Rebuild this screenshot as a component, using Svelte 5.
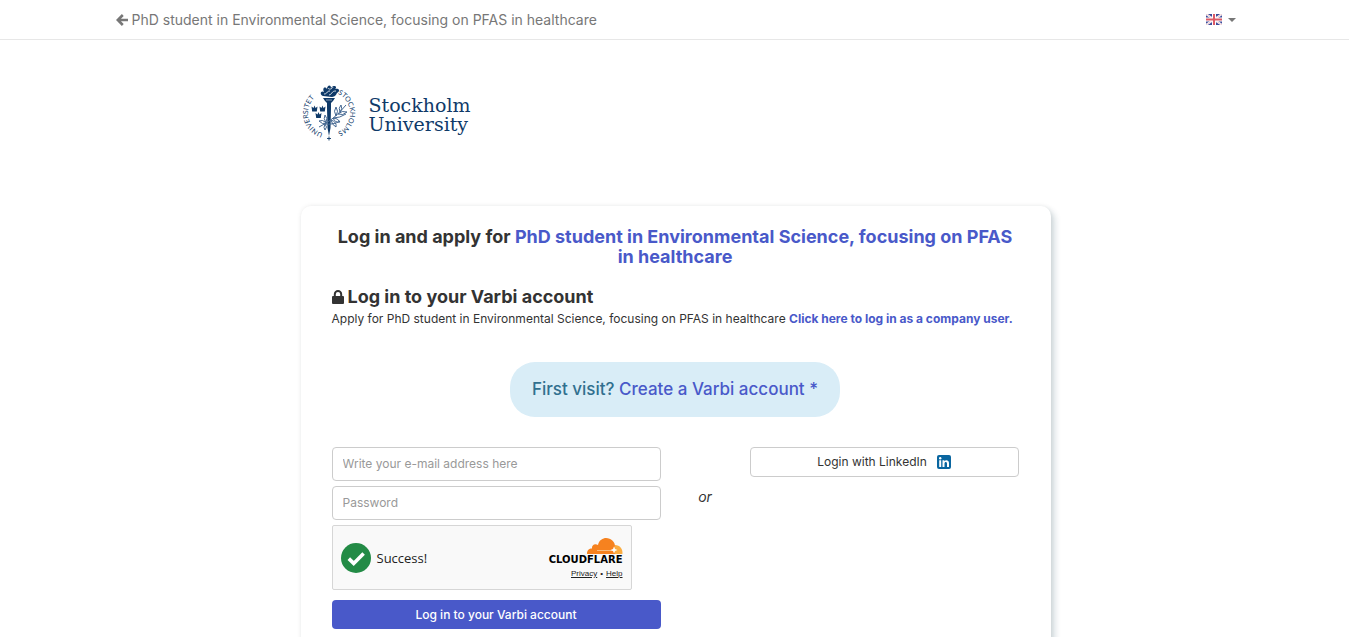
<script lang="ts">
	const position = 'PhD student in Environmental Science, focusing on PFAS in healthcare';

	let email = $state('');
	let password = $state('');
</script>

<nav class="topbar">
	<div class="topbar-inner">
		<a class="back" href="#position">
			<svg width="12" height="12" viewBox="0 0 12 12" aria-hidden="true">
				<path d="M6.8 1 L1.8 6 L6.8 11 M2.4 6 H12" fill="none" stroke="currentColor" stroke-width="2.6" />
			</svg>
			<span>{position}</span>
		</a>
		<button class="language" type="button" aria-label="Language: English">
			<svg width="16" height="11" viewBox="0 0 16 11" aria-hidden="true">
				<rect width="16" height="11" fill="#3d4c9a" />
				<path d="M0 0 L16 11 M16 0 L0 11" stroke="#fff" stroke-width="2" />
				<path d="M0 0 L16 11 M16 0 L0 11" stroke="#dfa0aa" stroke-width="0.6" />
				<path d="M8 0 V11 M0 5.5 H16" stroke="#fff" stroke-width="4" />
				<path d="M8 0 V11 M0 5.5 H16" stroke="#dc5a66" stroke-width="2" />
			</svg>
			<span class="caret"></span>
		</button>
	</div>
</nav>

<main class="page">
	<a class="logo" href="#home">
		<svg width="58" height="60" viewBox="0 0 58 60" fill="#0f3a69" aria-hidden="true">
			<defs>
				<path id="ring-left" d="M28 51 A21 21 0 0 1 28 9" />
				<path id="ring-right" d="M28 9 A21 21 0 0 1 28 51" />
			</defs>
			<text class="seal-text"><textPath href="#ring-left" startOffset="6">UNIVERSITET</textPath></text>
			<text class="seal-text"><textPath href="#ring-right" startOffset="9">STOCKHOLMS</textPath></text>
			<path d="M28 53.5 v4 M26 55.5 h4" stroke="#0f3a69" stroke-width="0.9" />
			<g transform="translate(-1 0)">
				<!-- flame -->
				<path d="M23 13 C19 11 21 7 24 9 C22 5 25 3 27 6 C27 2 31 1 31 5 C34 1 38 4 35 6 C39 5 41 8 37 10 C36 13 33 14 32 14 Z" />
				<path d="M24 11 C28 11 26 8 30 8 M29 12 C33 11 31 8 36 8 M28 5 C29 7 32 6 33 4" fill="none" stroke="#fff" stroke-width="0.8" />
				<!-- torch -->
				<path d="M23 15 H35 L33 18 L31 20 V25 L30.5 45 L29 53 L27.5 45 L27 25 V20 L25 18 Z" />
				<path d="M26 17 H32" stroke="#fff" stroke-width="0.5" />
				<!-- crowns -->
				<path d="M11.5 23.5 l2 1.5 1-2.5 1 2.5 2-1.5 -.7 5 h-4.6 z M19.5 23.5 l2 1.5 1-2.5 1 2.5 2-1.5 -.7 5 h-4.6 z M15.5 30 l2 1.5 1-2.5 1 2.5 2-1.5 -.7 5 h-4.6 z" />
				<!-- olive branch -->
				<g fill="none" stroke="#456892" stroke-width="1">
					<path d="M19 44 Q34 37 46 22 M24 41 Q34 42 40 38 M33 35 Q40 35 46 31" />
					<path d="M36 33 q-3 -5 0 -9 q3 4 0 9 M40 29 q-2 -4 1 -7 q2 4 -1 7 M38 31 q4 -4 9 -2 q-4 4 -9 2 M33 35 q5 0 7 4 q-5 1 -7 -4 M27 40 q-5 -4 -8 -2 q3 4 8 2 M25 41 q-2 4 0 6 q3 -3 0 -6 M31 37 q1 5 5 7 q1 -5 -5 -7 M26 40 q-3 -5 -1 -8 q3 3 1 8" />
				</g>
			</g>
		</svg>
		<span class="wordmark">Stockholm<br />University</span>
	</a>

	<section class="card">
		<h1>Log in and apply for <a href="#position">{position}</a></h1>

		<h2>
			<svg width="12" height="14" viewBox="0 0 12 14" aria-hidden="true">
				<rect y="6" width="12" height="8" rx="1" fill="currentColor" />
				<path d="M2.8 7 V4.3 A3.2 3.2 0 0 1 9.2 4.3 V7" fill="none" stroke="currentColor" stroke-width="2" />
			</svg>
			Log in to your Varbi account
		</h2>
		<p class="intro">
			Apply for {position} <a href="#company">Click here to log in as a company user.</a>
		</p>

		<div class="first-visit">
			First visit? <a href="#create">Create a Varbi account *</a>
		</div>

		<div class="login">
			<form class="login-form" onsubmit={(e) => e.preventDefault()}>
				<input type="email" aria-label="E-mail address" placeholder="Write your e-mail address here" bind:value={email} />
				<input type="password" aria-label="Password" placeholder="Password" bind:value={password} />

				<div class="challenge">
					<svg width="30" height="30" viewBox="0 0 30 30" aria-hidden="true">
						<circle cx="15" cy="15" r="15" fill="#238b46" />
						<path d="M7.8 15.6 L12.7 20.4 L22.6 10.5" fill="none" stroke="#fff" stroke-width="3.6" />
					</svg>
					<span class="success">Success!</span>
					<div class="cloudflare">
						<svg width="36" height="16" viewBox="0 0 36 16" aria-hidden="true">
							<path d="M26 16 L28 7 C33 7 36 11 35.4 16 Z" fill="#fbad41" />
							<path d="M0 16 C0 12 2 10.5 5 10.5 C4.5 7 8 5 11 7 C12 2 16 0 19 0 C24 0 28 4 28 8 L26.5 12 L28 16 Z" fill="#f6821f" />
							<path d="M10 12.5 H27" stroke="#fbc48a" stroke-width="0.9" />
							<path d="M27 8.5 L28 11 L30.5 12 L28 13 L27 15.5 L26 13 L23.5 12 L26 11 Z" fill="#fff" />
						</svg>
						<span class="brand">CLOUDFLARE</span>
						<span class="terms"><a href="#privacy">Privacy</a><span>•</span><a href="#help">Help</a></span>
					</div>
				</div>

				<button class="submit" type="submit">Log in to your Varbi account</button>
			</form>

			<em class="or">or</em>

			<button class="linkedin" type="button">
				Login with LinkedIn
				<svg width="14" height="14" viewBox="0 0 14 14" aria-hidden="true">
					<rect width="14" height="14" rx="2" fill="#0a66a0" />
					<g fill="#fff">
						<circle cx="3.2" cy="3.2" r="1.2" />
						<path d="M2.2 5.3 h2 V12 h-2 Z M5.5 5.3 h1.9 v.9 C8.6 4.5 12 4.8 12 8 V12 h-2 V8.6 C10 6.4 7.5 6.5 7.5 8.6 V12 h-2 Z" />
					</g>
				</svg>
			</button>
		</div>
	</section>
</main>

<style>
	:global(body) {
		background: #fff;
		color: #333;
		font-family: Inter, 'Liberation Sans', sans-serif;
		font-size: 13px;
		line-height: 18px;
		scrollbar-width: none;
	}

	a {
		color: #4959c9;
		text-decoration: none;
	}

	button,
	input {
		font: inherit;
		box-sizing: border-box;
	}

	.topbar {
		padding-left: 2px;
		border-bottom: 1px solid #e7e7e7;
	}

	.topbar-inner {
		max-width: 1120px;
		height: 39px;
		margin: 0 auto;
		display: flex;
		align-items: center;
		justify-content: space-between;
	}

	.back {
		display: flex;
		align-items: center;
		gap: 4px;
		color: #777;
		font-size: 14px;
	}

	.language {
		display: flex;
		align-items: center;
		gap: 6px;
		padding: 0;
		border: none;
		background: none;
		color: #777;
	}

	.caret {
		border: 4px solid transparent;
		border-top-color: currentColor;
		border-bottom: none;
	}

	.page {
		max-width: 750px;
		margin: 0 auto;
		padding: 43px 0 0 2px;
	}

	.logo {
		display: flex;
		align-items: center;
		gap: 10px;
		color: #0f3a69;
	}

	.seal-text {
		font-family: Lato, sans-serif;
		font-size: 7px;
	}

	.wordmark {
		padding-top: 4px;
		font-family: 'DejaVu Serif', serif;
		font-size: 19px;
		line-height: 19px;
	}

	.card {
		margin-top: 63px;
		padding: 21px 32px 60px 31px;
		border-radius: 10px;
		box-shadow:
			0 0 5px rgba(0, 0, 0, 0.08),
			4px 4px 6px rgba(30, 70, 90, 0.18);
	}

	h1,
	h2 {
		margin: 0;
		font-size: 18px;
		font-weight: 700;
		line-height: 20px;
	}

	h1 {
		text-align: center;
	}

	h2 {
		display: flex;
		align-items: center;
		gap: 4px;
		margin-top: 20px;
	}

	.intro {
		margin: 3px 0 0;
		font-size: 12px;
	}

	.intro a {
		font-weight: 700;
	}

	.first-visit {
		width: fit-content;
		margin: 34px auto 0;
		padding: 18px 22px;
		border-radius: 25px;
		background: #d9edf7;
		color: #31708f;
		font-size: 17px;
		font-weight: 500;
		line-height: 19px;
	}

	.login {
		display: grid;
		grid-template-columns: 329fr 89fr 269fr;
		align-items: start;
		margin-top: 30px;
	}

	.login-form {
		display: flex;
		flex-direction: column;
		gap: 5px;
	}

	input {
		width: 100%;
		height: 34px;
		padding: 5px 10px 7px;
		border: 1px solid #ccc;
		border-radius: 4px;
		background: #fff;
		color: #555;
		font-size: 12px;
	}

	input::placeholder {
		color: #999;
	}

	.challenge {
		box-sizing: border-box;
		width: 300px;
		height: 65px;
		padding: 0 8px;
		display: flex;
		align-items: center;
		gap: 6px;
		border: 1px solid #d6d6d6;
		border-radius: 2px;
		background: #f9f9f9;
		color: #222;
		font-family: 'Open Sans', sans-serif;
	}

	.success {
		font-size: 13px;
	}

	.cloudflare {
		margin-left: auto;
		padding-top: 4px;
		display: flex;
		flex-direction: column;
		align-items: flex-end;
	}

	.brand {
		color: #000;
		font-family: 'DejaVu Sans', sans-serif;
		font-size: 10px;
		font-weight: 700;
		line-height: 12px;
	}

	.terms {
		display: flex;
		gap: 3px;
		font-family: 'Liberation Sans', sans-serif;
		font-size: 8px;
		line-height: 15px;
	}

	.terms a {
		color: #222;
		text-decoration: underline;
	}

	.submit {
		height: 29px;
		margin-top: 5px;
		border: none;
		border-radius: 4px;
		background: #4959c9;
		color: #fff;
		font-size: 12px;
		font-weight: 500;
	}

	.or {
		margin-top: 40px;
		font-size: 14px;
		line-height: 20px;
		text-align: center;
	}

	.linkedin {
		display: flex;
		align-items: center;
		justify-content: center;
		gap: 10px;
		height: 30px;
		border: 1px solid #ccc;
		border-radius: 4px;
		background: #fff;
		color: #333;
		font-size: 12px;
	}
</style>
